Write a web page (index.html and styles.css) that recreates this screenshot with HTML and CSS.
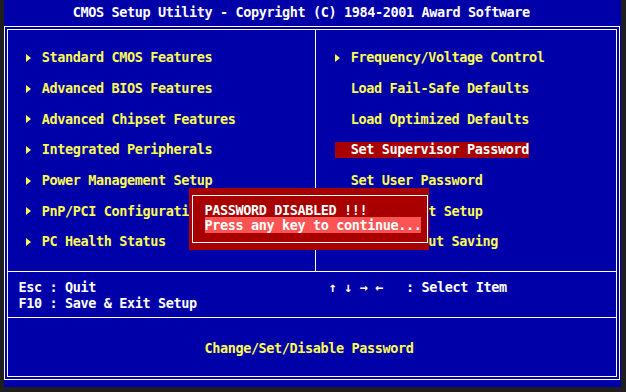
FILE: index.html
```html
<!DOCTYPE html>
<html lang="en">
<head>
    <meta charset="UTF-8">
    <meta name="viewport" content="width=device-width, initial-scale=1.0">
    <title>CMOS Setup Utility</title>
    <link rel="stylesheet" href="styles.css">
</head>
<body>

<div class="screen">
    <div class="title">CMOS Setup Utility - Copyright (C) 1984-2001 Award Software</div>

    <div class="frame">
        <div class="menus">
            <ul class="menu menu-left">
                <li class="item sub"><span class="arrow"></span>Standard CMOS Features</li>
                <li class="item sub"><span class="arrow"></span>Advanced BIOS Features</li>
                <li class="item sub"><span class="arrow"></span>Advanced Chipset Features</li>
                <li class="item sub"><span class="arrow"></span>Integrated Peripherals</li>
                <li class="item sub"><span class="arrow"></span>Power Management Setup</li>
                <li class="item sub"><span class="arrow"></span>PnP/PCI Configurations</li>
                <li class="item sub"><span class="arrow"></span>PC Health Status</li>
            </ul>
            <ul class="menu menu-right">
                <li class="item sub"><span class="arrow"></span>Frequency/Voltage Control</li>
                <li class="item"><span class="arrow"></span>Load Fail-Safe Defaults</li>
                <li class="item"><span class="arrow"></span>Load Optimized Defaults</li>
                <li class="item selected"><span class="arrow"></span>Set Supervisor Password</li>
                <li class="item"><span class="arrow"></span>Set User Password</li>
                <li class="item"><span class="arrow"></span>Save &amp; Exit Setup</li>
                <li class="item"><span class="arrow"></span>Exit Without Saving</li>
            </ul>
        </div>

        <div class="keys">
            <div class="keys-left">
                <div class="line">Esc : Quit</div>
                <div class="line">F10 : Save &amp; Exit Setup</div>
            </div>
            <div class="keys-right">
                <div class="line">↑ ↓ → ←   : Select Item</div>
            </div>
        </div>

        <div class="status">Change/Set/Disable Password</div>
    </div>

    <div class="popup">
        <div class="popup-box">
            <div class="line">PASSWORD DISABLED !!!</div>
            <div class="line"><span class="prompt">Press any key to continue...</span></div>
        </div>
    </div>
</div>

</body>
</html>
```

FILE: styles.css
```css
body {
    margin: 0;
    background: #1e1e1e;
    font-family: "DejaVu Sans Mono", monospace;
    font-weight: bold;
    font-size: 13.5px;
    letter-spacing: -0.38px;
}

.screen {
    position: relative;
    margin-left: 4px;
    width: 617px;
    height: 387px;
    background: #0000a8;
    color: #ffffff;
}

.title {
    height: 26px;
    box-sizing: border-box;
    padding: 5px 0 0 68.75px;
    line-height: 15.3px;
    white-space: pre;
}

.line {
    line-height: 15.3px;
    white-space: pre;
}

.frame {
    margin-right: 1px;
    height: 354px;
    box-sizing: border-box;
    border: 4px double #ffffff;
}


.menus {
    display: grid;
    grid-template-columns: 308px 1fr;
    height: 242px;
    box-sizing: border-box;
    border-bottom: 1px solid #ffffff;
}

.menu {
    list-style: none;
    margin: 0;
    padding: 20.35px 0 0 18.25px;
    display: flex;
    flex-direction: column;
    align-items: flex-start;
    gap: 15.33px;
    color: #fcfc54;
}

.menu-left {
    border-right: 1px solid #ffffff;
}

.menu-right {
    padding-left: 19.25px;
}

.item {
    display: flex;
    line-height: 15.33px;
    white-space: pre;
}

.arrow {
    flex: none;
    width: 15.5px;
    display: flex;
    align-items: center;
}

.sub .arrow::before {
    content: "";
    border-left: 5px solid #fcfc54;
    border-top: 4px solid transparent;
    border-bottom: 4px solid transparent;
}

.selected {
    background: #a80000;
    color: #ffffff;
}


.keys {
    display: grid;
    grid-template-columns: 308px 1fr;
    height: 46px;
    box-sizing: border-box;
    padding-top: 8.4px;
    border-bottom: 1px solid #ffffff;
}

.keys-left {
    padding-left: 10.5px;
}

.keys-right {
    padding-left: 12.5px;
}

.status {
    padding: 23.35px 6px 0 0;
    text-align: center;
    line-height: 15.3px;
    color: #fcfc54;
}


.popup {
    position: absolute;
    left: 185px;
    top: 188px;
    width: 240px;
    box-sizing: border-box;
    padding: 7px 1px 7px 3px;
    background: #a80000;
}

.popup-box {
    border: 1px solid #ffffff;
    padding: 7px 0 8px 11.5px;
}

.prompt {
    background: #fc5454;
}
```
